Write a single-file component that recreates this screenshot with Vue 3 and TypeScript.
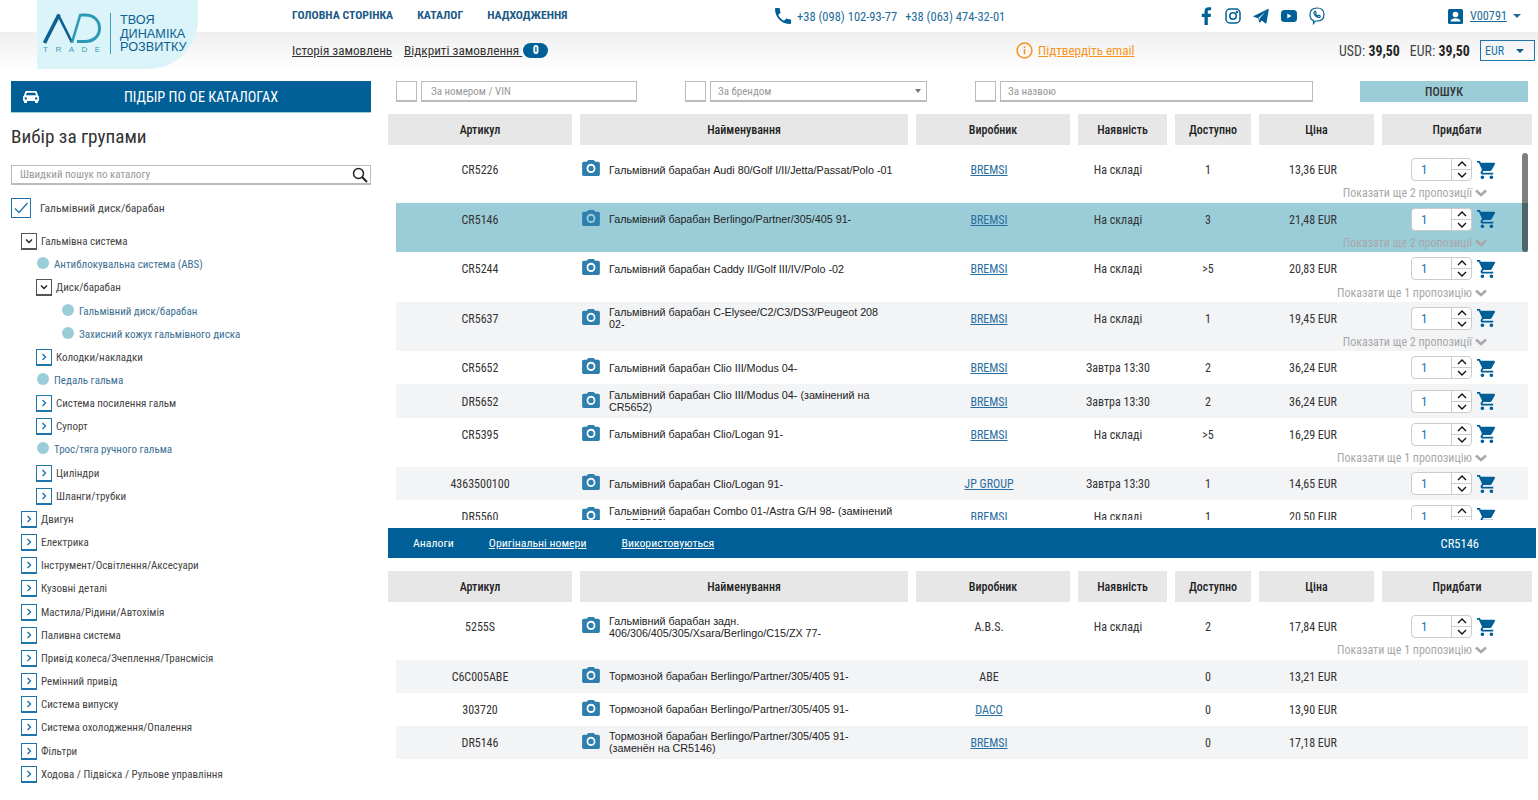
<script setup lang="ts">
interface TreeItem {
  label: string
  level: number
  kind: 'open' | 'closed' | 'leaf'
}

interface Part {
  code: string
  name: string
  brand: string
  link: boolean
  stock: string
  qty: string
  price: string
  more?: string
  buy?: boolean
  active?: boolean
  striped?: boolean
}

const columns = ['Артикул', 'Найменування', 'Виробник', 'Наявність', 'Доступно', 'Ціна', 'Придбати']

const tree: TreeItem[] = [
  { label: 'Гальмівна система', level: 0, kind: 'open' },
  { label: 'Антиблокувальна система (ABS)', level: 1, kind: 'leaf' },
  { label: 'Диск/барабан', level: 1, kind: 'open' },
  { label: 'Гальмівний диск/барабан', level: 2, kind: 'leaf' },
  { label: 'Захисний кожух гальмівного диска', level: 2, kind: 'leaf' },
  { label: 'Колодки/накладки', level: 1, kind: 'closed' },
  { label: 'Педаль гальма', level: 1, kind: 'leaf' },
  { label: 'Система посилення гальм', level: 1, kind: 'closed' },
  { label: 'Супорт', level: 1, kind: 'closed' },
  { label: 'Трос/тяга ручного гальма', level: 1, kind: 'leaf' },
  { label: 'Циліндри', level: 1, kind: 'closed' },
  { label: 'Шланги/трубки', level: 1, kind: 'closed' },
  { label: 'Двигун', level: 0, kind: 'closed' },
  { label: 'Електрика', level: 0, kind: 'closed' },
  { label: 'Інструмент/Освітлення/Аксесуари', level: 0, kind: 'closed' },
  { label: 'Кузовні деталі', level: 0, kind: 'closed' },
  { label: 'Мастила/Рідини/Автохімія', level: 0, kind: 'closed' },
  { label: 'Паливна система', level: 0, kind: 'closed' },
  { label: 'Привід колеса/Зчеплення/Трансмісія', level: 0, kind: 'closed' },
  { label: 'Ремінний привід', level: 0, kind: 'closed' },
  { label: 'Система випуску', level: 0, kind: 'closed' },
  { label: 'Система охолодження/Опалення', level: 0, kind: 'closed' },
  { label: 'Фільтри', level: 0, kind: 'closed' },
  { label: 'Ходова / Підвіска / Рульове управління', level: 0, kind: 'closed' },
]

const parts: Part[] = [
  { code: 'CR5226', name: 'Гальмівний барабан Audi 80/Golf I/II/Jetta/Passat/Polo -01', brand: 'BREMSI', link: true, stock: 'На складі', qty: '1', price: '13,36 EUR', more: 'Показати ще 2 пропозиції', buy: true },
  { code: 'CR5146', name: 'Гальмівний барабан Berlingo/Partner/305/405 91-', brand: 'BREMSI', link: true, stock: 'На складі', qty: '3', price: '21,48 EUR', more: 'Показати ще 2 пропозиції', buy: true, active: true },
  { code: 'CR5244', name: 'Гальмівний барабан Caddy II/Golf III/IV/Polo -02', brand: 'BREMSI', link: true, stock: 'На складі', qty: '>5', price: '20,83 EUR', more: 'Показати ще 1 пропозицію', buy: true },
  { code: 'CR5637', name: 'Гальмівний барабан C-Elysee/C2/C3/DS3/Peugeot 208 02-', brand: 'BREMSI', link: true, stock: 'На складі', qty: '1', price: '19,45 EUR', more: 'Показати ще 2 пропозиції', buy: true, striped: true },
  { code: 'CR5652', name: 'Гальмівний барабан Clio III/Modus 04-', brand: 'BREMSI', link: true, stock: 'Завтра 13:30', qty: '2', price: '36,24 EUR', buy: true },
  { code: 'DR5652', name: 'Гальмівний барабан Clio III/Modus 04- (замінений на CR5652)', brand: 'BREMSI', link: true, stock: 'Завтра 13:30', qty: '2', price: '36,24 EUR', buy: true, striped: true },
  { code: 'CR5395', name: 'Гальмівний барабан Clio/Logan 91-', brand: 'BREMSI', link: true, stock: 'На складі', qty: '>5', price: '16,29 EUR', more: 'Показати ще 1 пропозицію', buy: true },
  { code: '4363500100', name: 'Гальмівний барабан Clio/Logan 91-', brand: 'JP GROUP', link: true, stock: 'Завтра 13:30', qty: '1', price: '14,65 EUR', buy: true, striped: true },
  { code: 'DR5560', name: 'Гальмівний барабан Combo 01-/Astra G/H 98- (замінений на CR5560)', brand: 'BREMSI', link: true, stock: 'На складі', qty: '1', price: '20,50 EUR', buy: true },
]

const analogs: Part[] = [
  { code: '5255S', name: 'Гальмівний барабан задн. 406/306/405/305/Xsara/Berlingo/C15/ZX 77-', brand: 'A.B.S.', link: false, stock: 'На складі', qty: '2', price: '17,84 EUR', more: 'Показати ще 1 пропозицію', buy: true },
  { code: 'C6C005ABE', name: 'Тормозной барабан Berlingo/Partner/305/405 91-', brand: 'ABE', link: false, stock: '', qty: '0', price: '13,21 EUR', striped: true },
  { code: '303720', name: 'Тормозной барабан Berlingo/Partner/305/405 91-', brand: 'DACO', link: true, stock: '', qty: '0', price: '13,90 EUR' },
  { code: 'DR5146', name: 'Тормозной барабан Berlingo/Partner/305/405 91- (заменён на CR5146)', brand: 'BREMSI', link: true, stock: '', qty: '0', price: '17,18 EUR', striped: true },
]

// the camera and cart glyphs repeat on every row
const camPath = 'M9 2 7.2 4H4c-1.1 0-2 .9-2 2v12c0 1.1.9 2 2 2h16c1.1 0 2-.9 2-2V6c0-1.1-.9-2-2-2h-3.2L15 2zm3 14.7c-2.8 0-5-2.3-5-5.2s2.2-5.2 5-5.2 5 2.3 5 5.2-2.2 5.2-5 5.2z'
const cartPath = 'M7 18c-1.1 0-2 .9-2 2s.9 2 2 2 2-.9 2-2-.9-2-2-2zM1 2v2h2l3.6 7.6-1.4 2.4c-.1.3-.2.6-.2 1 0 1.1.9 2 2 2h12v-2H7.4c-.1 0-.2-.1-.2-.3v-.1l.9-1.6h7.4c.8 0 1.4-.4 1.8-1l3.6-6.5c.1-.2.1-.3.1-.5 0-.6-.4-1-1-1H5.2l-.9-2zm16 16c-1.1 0-2 .9-2 2s.9 2 2 2 2-.9 2-2-.9-2-2-2z'
</script>

<template>
  <div class="page">
    <header class="top">
      <a class="logo">
        <div class="logo-mark">
          <svg width="58" height="31" viewBox="0 0 58 31" fill="none">
            <path d="M1.5 30 16 1.5" stroke="#0f5f92" stroke-width="3.6" />
            <path d="M15 1.5 29 29.5" stroke="#0f5f92" stroke-width="2.6" />
            <path d="M29 29.5 37.5 1" stroke="#2b9ab4" stroke-width="2.6" />
            <path d="M38 2h4c9 0 14.5 5.5 14.5 13.5S50 28.5 42 28.5h-8" stroke="#2b9ab4" stroke-width="3" />
          </svg>
          <span class="trade">TRADE</span>
        </div>
        <i class="logo-rule"></i>
        <span class="slogan">ТВОЯ<br />ДИНАМІКА<br />РОЗВИТКУ</span>
      </a>
      <div class="top-body">
        <div class="top-row first">
          <nav class="nav">
            <a>ГОЛОВНА СТОРІНКА</a>
            <a>КАТАЛОГ</a>
            <a>НАДХОДЖЕННЯ</a>
          </nav>
          <div class="phones">
            <svg width="16" height="16" viewBox="3 3 18 18"><path fill="#005f96" d="M6.6 10.8c1.4 2.8 3.8 5.1 6.6 6.6l2.2-2.2c.3-.3.7-.4 1-.2 1.1.4 2.3.6 3.6.6.6 0 1 .4 1 1V20c0 .6-.4 1-1 1C10.6 21 3 13.4 3 4c0-.6.4-1 1-1h3.5c.6 0 1 .4 1 1 0 1.3.2 2.5.6 3.6.1.3 0 .7-.2 1l-2.3 2.2z" /></svg>
            <span>+38 (098) 102-93-77</span>
            <span>+38 (063) 474-32-01</span>
          </div>
          <div class="socials">
            <svg width="12" height="18" viewBox="0 0 12 18"><path fill="#005f96" d="M3.5 18V10H.8V6.8h2.7V4.5C3.5 1.7 5.1.2 7.6.2c1.2 0 2.2.1 2.5.1V3.2H8.4c-1.3 0-1.6.7-1.6 1.6v2h3.2L9.6 10H6.8v8z" /></svg>
            <svg width="16" height="16" viewBox="0 0 16 16" fill="none" stroke="#005f96" stroke-width="1.5"><rect x="1" y="1" width="14" height="14" rx="4" /><circle cx="8" cy="8" r="3.2" /><circle cx="12" cy="4" r=".6" fill="#005f96" /></svg>
            <svg width="16" height="15" viewBox="0 0 16 15"><path fill="#005f96" d="M15.8.4 13.4 14c-.1.5-.5.6-.9.4L8.8 11.6 7 13.4c-.3.3-.6.3-.7-.2L5 9.2.6 7.8c-.6-.2-.6-.6.1-.9L15 .1c.5-.2.9 0 .8.3zM12.4 3 5.5 8.7l.7 3 .5-2.4z" /></svg>
            <svg width="16" height="12" viewBox="0 0 16 12"><rect width="16" height="12" rx="3.5" fill="#005f96" /><path fill="#fff" d="M6.3 3.5v5l4.2-2.5z" /></svg>
            <svg width="16" height="18" viewBox="0 0 16 18" fill="none" stroke="#005f96" stroke-width="1.2"><path d="M8 1c4.4 0 7 2.3 7 6.5S12.4 14 8 14H6.5l-2 2.5v-2.9C2 12.8 1 10.6 1 7.5 1 3.3 3.6 1 8 1z" /><path d="M5.2 4.6c.6-.6 1.2-.4 1.5.2l.4.7c.2.4 0 .7-.3 1-.2.2-.1.5.2 1 .4.6.9 1 1.3 1.2.4.1.6 0 .8-.3.3-.3.6-.4 1-.2l.8.5c.5.3.5.8 0 1.3-.7.6-1.5.6-2.5.1-1.8-.9-3-2.3-3.4-3.8-.2-.7-.2-1.3.2-1.700z" /></svg>
          </div>
          <div class="account">
            <svg width="15" height="15" viewBox="0 0 15 15"><rect width="15" height="15" rx="1.5" fill="#005f96" /><circle cx="7.5" cy="5.5" r="2.8" fill="#fff" /><path fill="#fff" d="M2.5 12.5c.3-2.3 2.5-3.3 5-3.3s4.7 1 5 3.3z" /></svg>
            <a>V00791</a>
            <i class="caret small"></i>
          </div>
        </div>
        <div class="top-row second">
          <a class="history">Історія замовлень</a>
          <a class="orders">Відкриті замовлення <b class="pill">0</b></a>
          <div class="confirm">
            <svg width="17" height="17" viewBox="0 0 17 17" fill="none"><circle cx="8.5" cy="8.5" r="7.4" stroke="#f7941d" stroke-width="1.5" /><rect x="7.7" y="7.2" width="1.6" height="5" fill="#f7941d" /><rect x="7.7" y="4.4" width="1.6" height="1.7" fill="#f7941d" /></svg>
            <a>Підтвердіть email</a>
          </div>
          <div class="rates">USD: <b>39,50</b><span>EUR: <b>39,50</b></span></div>
          <div class="currency">EUR<i class="caret"></i></div>
        </div>
      </div>
    </header>

    <div class="content">
      <aside class="side">
        <button class="oe-btn">
          <svg width="16" height="14" viewBox="0 0 16 14"><path fill="#fff" fill-rule="evenodd" d="M3.4 1h9.2c.6 0 1 .3 1.2.8L15 5.4c.6.3 1 .9 1 1.6v4h-1v2h-3v-2H4v2H1v-2H0V7c0-.7.4-1.3 1-1.6l1.2-3.6C2.4 1.3 2.8 1 3.4 1zm.4 1.800L3 5.3h10l-.8-2.5zM2.800 7.200a1.200 1.200 0 1 0 0 2.400 1.200 1.200 0 0 0 0-2.400zm10.400 0a1.200 1.200 0 1 0 0 2.400 1.200 1.200 0 0 0 0-2.400z" /></svg>
          <span>ПІДБІР ПО ОЕ КАТАЛОГАХ</span>
        </button>
        <h2 class="side-title">Вибір за групами</h2>
        <div class="quick-search">
          <input placeholder="Швидкий пошук по каталогу" />
          <svg width="16" height="16" viewBox="0 0 16 16" fill="none" stroke="#222" stroke-width="1.5"><circle cx="6.5" cy="6.5" r="5" /><path d="M10.2 10.2 15 15" stroke-width="2" /></svg>
        </div>
        <label class="picked">
          <span class="picked-box"><svg width="14" height="12" viewBox="0 0 14 12" fill="none" stroke="#1e74ab" stroke-width="1.3"><path d="M1 6.5 5 10.5 13.5 1" /></svg></span>
          Гальмівний диск/барабан
        </label>
        <ul class="tree">
          <li v-for="item in tree" :key="item.label" :class="['node', `lv${item.level}`, item.kind]">
            <span v-if="item.kind === 'leaf'" class="dot"></span>
            <span v-else class="toggle">
              <svg width="8" height="8" viewBox="0 0 8 8" fill="none" :stroke="item.kind === 'open' ? '#222' : '#1e74ab'" stroke-width="1.4">
                <path v-if="item.kind === 'open'" d="M1 2.5 4 5.5 7 2.5" />
                <path v-else d="M2.5 1 5.5 4 2.5 7" />
              </svg>
            </span>
            <span class="node-label">{{ item.label }}</span>
          </li>
        </ul>
      </aside>

      <main class="main">
        <div class="filters">
          <span class="check"></span>
          <input class="f-num" placeholder="За номером / VIN" />
          <span class="check c2"></span>
          <div class="f-brand">За брендом<i class="caret grey"></i></div>
          <span class="check c2"></span>
          <input class="f-name" placeholder="За назвою" />
          <button class="find">ПОШУК</button>
        </div>

        <div class="thead">
          <div v-for="c in columns" :key="c" class="th">{{ c }}</div>
        </div>
        <div class="list">
          <div v-for="p in parts" :key="p.code" class="row" :class="{ active: p.active, striped: p.striped }">
            <div class="cell code">{{ p.code }}</div>
            <div class="cell name">
              <svg class="cam" width="18" height="16" viewBox="2 2 20 18"><circle cx="12" cy="11.5" r="3" fill="#2e7fae" /><path fill="#2e7fae" :d="camPath" /></svg>
              <span class="name-text">{{ p.name }}</span>
            </div>
            <div class="cell"><a v-if="p.link" class="brand">{{ p.brand }}</a><template v-else>{{ p.brand }}</template></div>
            <div class="cell">{{ p.stock }}</div>
            <div class="cell">{{ p.qty }}</div>
            <div class="cell">{{ p.price }}</div>
            <div class="cell buy">
              <template v-if="p.buy">
                <div class="spin">
                  <span class="spin-val">1</span>
                  <span class="spin-btns">
                    <svg width="10" height="6" viewBox="0 0 10 6" fill="none" stroke="#111" stroke-width="1.4"><path d="M1 5 5 1 9 5" /></svg>
                    <i></i>
                    <svg width="10" height="6" viewBox="0 0 10 6" fill="none" stroke="#111" stroke-width="1.4"><path d="M1 1 5 5 9 1" /></svg>
                  </span>
                </div>
                <svg class="cart" width="18" height="18" viewBox="1 2 20 20"><path fill="#005f96" :d="cartPath" /></svg>
              </template>
            </div>
            <div v-if="p.more" class="more">
              {{ p.more }}
              <svg width="12" height="8" viewBox="0 0 12 8" fill="none" stroke="#a8a8a8" stroke-width="2.6"><path d="M1 1.5 6 6 11 1.5" /></svg>
            </div>
          </div>
          <div class="scroll-thumb"></div>
        </div>

        <div class="tabs">
          <span class="tab plain">Аналоги</span>
          <a class="tab">Оригінальні номери</a>
          <a class="tab">Використовуються</a>
          <span class="tab-code">CR5146</span>
        </div>

        <div class="thead second-head">
          <div v-for="c in columns" :key="c" class="th">{{ c }}</div>
        </div>
        <div class="rows-static">
          <div v-for="p in analogs" :key="p.code" class="row" :class="{ striped: p.striped }">
            <div class="cell code">{{ p.code }}</div>
            <div class="cell name">
              <svg class="cam" width="18" height="16" viewBox="2 2 20 18"><circle cx="12" cy="11.5" r="3" fill="#2e7fae" /><path fill="#2e7fae" :d="camPath" /></svg>
              <span class="name-text">{{ p.name }}</span>
            </div>
            <div class="cell"><a v-if="p.link" class="brand">{{ p.brand }}</a><template v-else>{{ p.brand }}</template></div>
            <div class="cell">{{ p.stock }}</div>
            <div class="cell">{{ p.qty }}</div>
            <div class="cell">{{ p.price }}</div>
            <div class="cell buy">
              <template v-if="p.buy">
                <div class="spin">
                  <span class="spin-val">1</span>
                  <span class="spin-btns">
                    <svg width="10" height="6" viewBox="0 0 10 6" fill="none" stroke="#111" stroke-width="1.4"><path d="M1 5 5 1 9 5" /></svg>
                    <i></i>
                    <svg width="10" height="6" viewBox="0 0 10 6" fill="none" stroke="#111" stroke-width="1.4"><path d="M1 1 5 5 9 1" /></svg>
                  </span>
                </div>
                <svg class="cart" width="18" height="18" viewBox="1 2 20 20"><path fill="#005f96" :d="cartPath" /></svg>
              </template>
            </div>
            <div v-if="p.more" class="more">
              {{ p.more }}
              <svg width="12" height="8" viewBox="0 0 12 8" fill="none" stroke="#a8a8a8" stroke-width="2.6"><path d="M1 1.5 6 6 11 1.5" /></svg>
            </div>
          </div>
        </div>
      </main>
    </div>
  </div>
</template>

<style>
html,
body {
  margin: 0;
  background: #fff;
  overflow: hidden;
}
</style>

<style scoped>
.page {
  width: 1538px;
  height: 800px;
  overflow: hidden;
  font-family: "Roboto Condensed", "Liberation Sans Narrow", Roboto, sans-serif;
  font-stretch: 75%;
  font-size: 12px;
  color: #333;
}

a {
  cursor: pointer;
}

.top {
  display: flex;
  height: 70px;
  padding-left: 37px;
  background: linear-gradient(#fff 32px, #efefef 32px, #fff 70px);
}

.logo {
  display: flex;
  flex-shrink: 0;
  align-items: center;
  gap: 9px;
  width: 161px;
  height: 69px;
  padding: 0 0 3px 6px;
  box-sizing: border-box;
  background: #daf4f9;
  border-bottom-right-radius: 50px;
}

.logo-mark {
  display: flex;
  flex-direction: column;
  gap: 2px;
  width: 58px;
  flex-shrink: 0;
}

.trade {
  width: 58px;
  font: 8px/8px "Liberation Sans", sans-serif;
  letter-spacing: 7.5px;
  color: #3e9eb6;
  white-space: nowrap;
}

.logo-rule {
  width: 1px;
  height: 41px;
  flex-shrink: 0;
  background: #3e9eb6;
}

.slogan {
  padding-top: 3px;
  font: 12.7px/13.5px "Liberation Sans", sans-serif;
  color: #0f5f92;
}

.top-body {
  width: 1243px;
  margin-left: 94px;
  flex-shrink: 0;
}

.top-row {
  display: flex;
  align-items: center;
}

.first {
  height: 32px;
}

.second {
  height: 38px;
  padding-bottom: 1px;
  box-sizing: border-box;
  font-size: 13.2px;
}

.nav {
  display: flex;
  gap: 24px;
  width: 483px;
  margin-bottom: 2px;
  font-size: 11.8px;
  font-weight: 700;
  color: #1b5a87;
}

.phones {
  display: flex;
  align-items: center;
  width: 426px;
  font-size: 12.5px;
  color: #1e6a99;
}

.phones span {
  margin-left: 6px;
}

.phones span + span {
  margin-left: 8px;
}

.socials {
  display: flex;
  align-items: center;
  gap: 12px;
  width: 247px;
}

.account {
  display: flex;
  align-items: center;
  font-size: 12.2px;
  color: #1e6a99;
}

.account a {
  margin: 0 6px 0 7px;
  text-decoration: underline;
}

.caret {
  display: inline-block;
  border-top: 4px solid #005f96;
  border-left: 4px solid transparent;
  border-right: 4px solid transparent;
}

.caret.small {
  border-top-color: #1e6a99;
}

.caret.grey {
  border-top: 4px solid #777;
  border-left-width: 3.5px;
  border-right-width: 3.5px;
  margin-left: auto;
}

.history {
  width: 112px;
  text-decoration: underline;
}

.orders {
  width: 612px;
  text-decoration: underline;
}

.pill {
  display: inline-block;
  width: 25px;
  height: 15px;
  margin-left: 1px;
  border-radius: 8px;
  background: #005f96;
  color: #fff;
  font-size: 12px;
  line-height: 15px;
  text-align: center;
  vertical-align: 1px;
}

.confirm {
  display: flex;
  align-items: center;
  gap: 5px;
  width: 323px;
  color: #f7941d;
}

.confirm a {
  text-decoration: underline;
}

.rates {
  width: 141px;
  font-size: 13.9px;
  color: #444;
}

.rates b {
  color: #222;
  font-weight: 700;
}

.rates span {
  margin-left: 10px;
}

.currency {
  display: flex;
  align-items: center;
  justify-content: space-between;
  width: 55px;
  height: 21px;
  padding: 0 10px 0 4px;
  box-sizing: border-box;
  border: 1px solid #1e74ab;
  font-size: 12px;
  color: #1e74ab;
}

.content {
  display: flex;
  padding: 11px 0 0 11px;
}

.side {
  width: 360px;
  flex-shrink: 0;
}

.oe-btn {
  display: flex;
  align-items: center;
  width: 100%;
  height: 32px;
  padding: 0 0 0 12px;
  border: 0;
  border-bottom: 1px solid #9bcdd9;
  background: #005f96;
  color: #fff;
  font: inherit;
  font-size: 14.3px;
}

.oe-btn span {
  flex: 1;
  text-align: center;
  padding-right: 8px;
}

.side-title {
  margin: 12px 0 16px;
  font-size: 19.2px;
  line-height: 24px;
  font-weight: 400;
  color: #333;
}

.quick-search {
  display: flex;
  align-items: center;
  height: 20px;
  padding: 0 2px 0 8px;
  border: 1px solid #bbb;
  border-bottom-width: 2px;
  box-sizing: border-box;
}

.quick-search input {
  flex: 1;
  min-width: 0;
  padding: 0;
  border: 0;
  outline: 0;
  background: transparent;
  font: inherit;
  font-size: 11px;
}

input::placeholder {
  color: #999;
  opacity: 1;
}

.picked {
  display: flex;
  align-items: center;
  gap: 9px;
  margin-top: 13px;
  height: 20px;
  font-size: 11.6px;
  color: #444;
}

.picked-box {
  display: flex;
  align-items: center;
  justify-content: center;
  width: 20px;
  height: 20px;
  box-sizing: border-box;
  border: 1px solid #1e74ab;
}

.tree {
  list-style: none;
  margin: 12px 0 0;
  padding: 0;
  font-size: 11px;
}

.node {
  display: flex;
  align-items: center;
  height: 23.17px;
  gap: 4px;
}

.lv0 {
  padding-left: 10px;
}

.lv1 {
  padding-left: 25px;
}

.lv2 {
  padding-left: 51px;
}

.lv1.leaf {
  padding-left: 26px;
}

.toggle {
  display: flex;
  align-items: center;
  justify-content: center;
  width: 16px;
  height: 17px;
  box-sizing: border-box;
  border: 1px solid #1e74ab;
  border-bottom-width: 2px;
  flex-shrink: 0;
}

.open > .toggle {
  border-color: #555;
}

.dot {
  width: 12px;
  height: 12px;
  margin: -3px 1px 0 0;
  border-radius: 50%;
  background: #9bcdd9;
  flex-shrink: 0;
}

.node-label {
  color: #444;
}

.leaf .node-label {
  color: #3b6f92;
}

.main {
  width: 1148px;
  margin-left: 17px;
}

.filters {
  display: flex;
  align-items: flex-start;
  height: 33px;
  padding-left: 8px;
}

.check,
.filters input,
.f-brand {
  height: 21px;
  box-sizing: border-box;
  border: 1px solid #bbb;
  border-bottom-width: 2px;
}

.check {
  width: 21px;
  margin-right: 4px;
}

.c2 {
  margin-left: 48px;
}

.filters input {
  padding: 0 9px;
  outline: 0;
  font: inherit;
  font-size: 11px;
}

.f-num {
  width: 216px;
}

.filters .f-name {
  width: 313px;
  padding-left: 7px;
}

.f-brand {
  display: flex;
  align-items: center;
  width: 217px;
  padding: 0 5px 0 7px;
  font-size: 11px;
  color: #999;
}

.find {
  width: 168px;
  height: 21px;
  margin-left: 47px;
  border: 0;
  background: #9bcdd9;
  color: #333;
  font: inherit;
  font-weight: 500;
}

.thead {
  display: grid;
  grid-template-columns: 184px 328px 154px 89px 76px 115px 150px;
  gap: 8px;
}

.th {
  display: flex;
  align-items: center;
  justify-content: center;
  height: 31px;
  background: #e7e7e7;
  font-weight: 500;
  color: #222;
}

.list {
  position: relative;
  height: 367px;
  margin-top: 8px;
  overflow: hidden;
}

.row {
  display: grid;
  grid-template-columns: 186px 328px 158px 100px 80px 130px 150px;
  width: 1132px;
  margin-left: 8px;
}

.row.striped {
  background: #f3f4f6;
}

.row.active {
  background: #9bcdd9;
}

.cell {
  display: flex;
  align-items: center;
  justify-content: center;
  min-height: 33.1px;
  padding-top: 1px;
  box-sizing: border-box;
  color: #333;
}

.code {
  padding-right: 18px;
}

.name {
  justify-content: flex-start;
  gap: 9px;
  padding: 0;
}

.cam {
  flex-shrink: 0;
  margin-top: -3px;
}

.name-text {
  font: 10.75px/12px "Liberation Sans", Arial, sans-serif;
  color: #222;
  max-width: 287px;
}

.brand {
  color: #2a6fa0;
  text-decoration: underline;
}

.buy {
  justify-content: flex-start;
  padding: 0 0 0 33px;
  gap: 5px;
}

.spin {
  display: flex;
  width: 61px;
  height: 23px;
  box-sizing: border-box;
  border: 1px solid #ccc;
  border-radius: 4px;
  background: #fff;
}

.spin-val {
  flex: 1;
  padding-left: 9px;
  font-size: 13px;
  line-height: 21px;
  color: #1e74ab;
}

.spin-btns {
  display: flex;
  flex-direction: column;
  align-items: center;
  justify-content: space-between;
  width: 20px;
  padding: 2px 0;
  box-sizing: border-box;
  border-left: 1px solid #ccc;
}

.spin-btns i {
  width: 100%;
  height: 1px;
  background: #ccc;
}

.more {
  grid-column: 1 / -1;
  display: flex;
  align-items: center;
  justify-content: flex-end;
  gap: 3px;
  height: 16.5px;
  padding: 0 41px 2px 0;
  box-sizing: border-box;
  color: #a8a8a8;
}

.scroll-thumb {
  position: absolute;
  top: 0;
  left: 1134px;
  width: 6px;
  height: 99px;
  border-radius: 3px;
  background: rgba(0, 0, 0, .5);
}

.tabs {
  display: flex;
  align-items: center;
  height: 30px;
  margin-top: 8px;
  background: #005f96;
  color: #fff;
  font-size: 11.8px;
}

.tab {
  margin-left: 35px;
  text-decoration: underline;
}

.tab.plain {
  margin-left: 25px;
  text-decoration: none;
}

.tab-code {
  margin-left: auto;
  margin-right: 57px;
  font-size: 12.5px;
}

.second-head {
  margin-top: 13px;
}

.rows-static {
  margin-top: 8px;
}
</style>
